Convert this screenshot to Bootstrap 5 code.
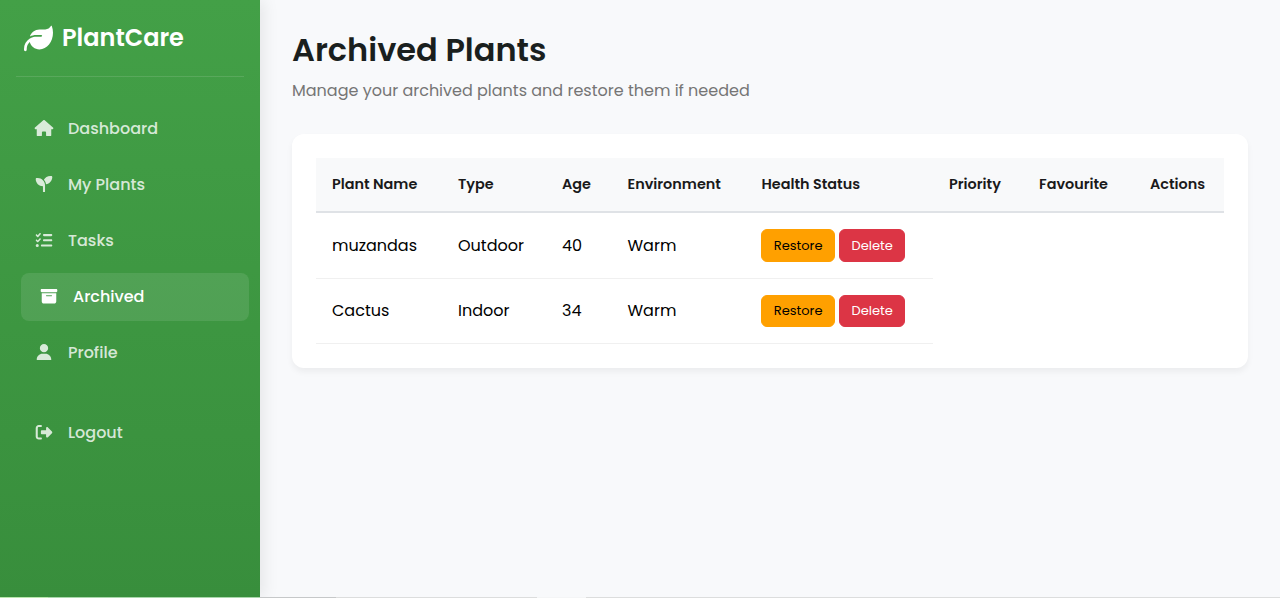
<!DOCTYPE html>
<html lang="en">
<head>
<meta charset="utf-8">
<meta name="viewport" content="width=device-width, initial-scale=1">
<title>PlantCare - Archived Plants</title>
<link href="https://cdn.jsdelivr.net/npm/bootstrap@5.3.0/dist/css/bootstrap.min.css" rel="stylesheet">
<style>
body{font-family:Poppins,Inter,"Open Sans",sans-serif;background:#f8f9fb;color:#1a1f1e;height:598px;overflow:hidden}
.sidebar{width:260px;height:598px;background:linear-gradient(180deg,#43a047,#388e3c);box-shadow:4px 0 15px rgba(0,0,0,.08);padding:16px}
.brand{height:61px;padding:0 0 17px 8px;border-bottom:1px solid rgba(255,255,255,.12);font-size:24px;font-weight:600;color:#fff;gap:9px}
.brand svg{width:29px;height:29px;fill:#fff;margin-top:2px}
.side-menu{margin-top:28px;gap:8px}
.side-menu .nav-link{height:48px;padding:0 16px;gap:12px;color:rgba(255,255,255,.8);font-weight:500;font-size:16px;border-radius:8px}
.side-menu .nav-link.active{background:rgba(255,255,255,.1);color:#fff;transform:translateX(5px)}
.side-menu svg{width:24px;height:16.6px;fill:currentColor;margin-bottom:2px}
.side-menu .logout{margin-top:24px}
.page{padding:32px}
.page h1{font-size:32px;font-weight:600;line-height:36px;margin:0 0 11px}
.page p{font-size:16px;line-height:24px;color:#757575;margin:0 0 31px}
.panel{background:#fff;border-radius:12px;padding:24px;height:234px;box-shadow:0 4px 6px rgba(0,0,0,.05)}
.plants{table-layout:fixed;width:908px;border-collapse:separate;border-spacing:0;color:#000;font-size:16px}
.plants th{background:#f8f9fa;height:55px;padding:0 0 0 16px;border-bottom:2px solid #dfe2e6;font-size:14.4px;font-weight:600;color:#1a1a1a;white-space:nowrap}
.plants td{height:65px;padding:0 0 0 16px;border-bottom:1px solid #f0f0f0;white-space:nowrap}
.plants tbody tr:first-child td{height:66px;padding-top:1px}
.plants td.void{border:0}
.plants .btn{font-size:13px;line-height:20px;padding:5px 0;height:32.6px;border-radius:6px}
.plants .row-actions{margin-left:-.4px}
.plants tr:first-child .row-actions{margin-bottom:1px}
.btn-restore{width:74px;background:#ffa000;border-color:#ffa000;color:#000}
.btn-remove{width:66px;background:#dc3545;border-color:#dc3545;color:#fff}
.edge{height:1px;background:linear-gradient(90deg,#b9e6ad 48px,#a9d7ab 48px 260px,#c6c8c9 260px 336px,#dcdddd 336px 537px,#f4f5f6 537px 586px,#dcdddd 586px)}
</style>
</head>
<body>
<div class="d-flex">
<aside class="sidebar flex-shrink-0">
<div class="brand d-flex align-items-center">
<svg viewBox="0 0 512 512"><path d="M272 96c-78.6 0-145.1 51.5-167.7 122.5c33.6-17 71.5-26.5 111.7-26.5h88c8.8 0 16 7.2 16 16s-7.2 16-16 16H216c-16.6 0-32.7 1.9-48.3 5.4c-25.9 5.9-49.9 16.4-71.4 30.7C38.3 298.8 0 364.9 0 440v16c0 13.3 10.7 24 24 24s24-10.7 24-24V440c0-48.7 20.7-92.5 53.8-123.2C121.6 392.3 190.3 448 272 448l1 0c132.1-.7 239-130.9 239-291.4c0-42.6-7.5-83.1-21.1-119.6c-2.6-6.9-12.7-6.6-16.2-.1C455.9 72.1 418.7 96 376 96L272 96z"/></svg>
<span>PlantCare</span></div>
<nav class="side-menu nav flex-column flex-nowrap">
<a class="nav-link d-flex align-items-center" href="#"><svg viewBox="0 0 576 512"><path d="M575.8 255.5c0 18-15 32.1-32 32.1h-32l.7 160.2c0 2.7-.2 5.4-.5 8.1V472c0 22.1-17.9 40-40 40H392c-22.1 0-40-17.9-40-40V384c0-17.7-14.3-32-32-32H256c-17.7 0-32 14.3-32 32v88c0 22.1-17.9 40-40 40H104c-22.1 0-40-17.9-40-40V287.6H32c-18 0-32-14-32-32.1c0-9 3-17 10-24L266.4 8c7-7 15-8 22-8s15 2 21 7L564.8 231.5c8 7 12 15 11 24z"/></svg><span>Dashboard</span></a>
<a class="nav-link d-flex align-items-center" href="#"><svg viewBox="0 0 512 512"><path d="M512 32c0 113.6-84.6 207.5-194.2 222c-7.1-53.4-30.6-101.6-65.3-139.3C290.8 46.3 364 0 448 0h32c17.7 0 32 14.3 32 32zM0 96C0 78.3 14.3 64 32 64H64c123.7 0 224 100.3 224 224v192c0 17.7-14.3 32-32 32s-32-14.3-32-32V320C100.3 320 0 219.7 0 96z"/></svg><span>My Plants</span></a>
<a class="nav-link d-flex align-items-center" href="#"><svg viewBox="0 0 512 512"><path d="M152.1 38.2c9.9 8.9 10.7 24 1.8 33.9l-72 80c-4.4 4.9-10.6 7.8-17.2 7.9s-12.9-2.4-17.6-7L7 113C-2.3 103.6-2.3 88.4 7 79s24.6-9.4 33.9 0l22.1 22.1 55.1-61.2c8.9-9.9 24-10.7 33.9-1.8zm0 160c9.9 8.9 10.7 24 1.8 33.9l-72 80c-4.4 4.9-10.6 7.8-17.2 7.9s-12.9-2.4-17.6-7L7 273c-9.4-9.4-9.4-24.6 0-33.9s24.6-9.4 33.9 0l22.1 22.1 55.1-61.2c8.9-9.9 24-10.7 33.9-1.8zM224 96c0-17.7 14.3-32 32-32H480c17.7 0 32 14.3 32 32s-14.3 32-32 32H256c-17.7 0-32-14.3-32-32zm0 160c0-17.7 14.3-32 32-32H480c17.7 0 32 14.3 32 32s-14.3 32-32 32H256c-17.7 0-32-14.3-32-32zM160 416c0-17.7 14.3-32 32-32H480c17.7 0 32 14.3 32 32s-14.3 32-32 32H192c-17.7 0-32-14.3-32-32zM48 368a48 48 0 1 1 0 96 48 48 0 1 1 0-96z"/></svg><span>Tasks</span></a>
<a class="nav-link active d-flex align-items-center" href="#"><svg viewBox="0 0 512 512"><path d="M32 32H480c17.7 0 32 14.3 32 32V96c0 17.7-14.3 32-32 32H32C14.3 128 0 113.7 0 96V64C0 46.3 14.3 32 32 32zm0 128H480V416c0 35.3-28.7 64-64 64H96c-35.3 0-64-28.7-64-64V160zm128 80c0 8.8 7.2 16 16 16H336c8.8 0 16-7.2 16-16s-7.2-16-16-16H176c-8.8 0-16 7.2-16 16z"/></svg><span>Archived</span></a>
<a class="nav-link d-flex align-items-center" href="#"><svg viewBox="0 0 448 512"><path d="M224 256A128 128 0 1 0 224 0a128 128 0 1 0 0 256zm-45.7 48C79.8 304 0 383.8 0 482.3C0 498.7 13.3 512 29.7 512H418.3c16.4 0 29.7-13.3 29.7-29.7C448 383.8 368.2 304 269.7 304H178.3z"/></svg><span>Profile</span></a>
<a class="nav-link logout d-flex align-items-center" href="#"><svg viewBox="0 0 512 512"><path d="M377.9 105.9L500.7 228.7c7.2 7.2 11.3 17.1 11.3 27.3s-4.1 20.1-11.3 27.3L377.9 406.1c-6.4 6.4-15 9.9-24 9.9c-18.7 0-33.9-15.2-33.9-33.9l0-62.1-128 0c-17.7 0-32-14.3-32-32l0-64c0-17.7 14.3-32 32-32l128 0 0-62.1c0-18.7 15.2-33.9 33.9-33.9c9 0 17.6 3.6 24 9.9zM160 96L96 96c-17.7 0-32 14.3-32 32l0 256c0 17.7 14.3 32 32 32l64 0c17.7 0 32 14.3 32 32s-14.3 32-32 32l-64 0c-53 0-96-43-96-96L0 128C0 75 43 32 96 32l64 0c17.7 0 32 14.3 32 32s-14.3 32-32 32z"/></svg><span>Logout</span></a>
</nav>
</aside>
<main class="page flex-grow-1">
<h1>Archived Plants</h1>
<p>Manage your archived plants and restore them if needed</p>
<section class="panel">
<table class="plants">
<colgroup><col style="width:126px"><col style="width:104px"><col style="width:65.5px"><col style="width:134px"><col style="width:187.5px"><col style="width:90px"><col style="width:111px"><col style="width:90px"></colgroup>
<thead><tr><th>Plant Name</th><th>Type</th><th>Age</th><th>Environment</th><th>Health Status</th><th>Priority</th><th>Favourite</th><th>Actions</th></tr></thead>
<tbody>
<tr><td>muzandas</td><td>Outdoor</td><td>40</td><td>Warm</td><td><div class="row-actions d-flex gap-1"><button class="btn btn-restore">Restore</button><button class="btn btn-remove">Delete</button></div></td><td class="void" colspan="3"></td></tr>
<tr><td>Cactus</td><td>Indoor</td><td>34</td><td>Warm</td><td><div class="row-actions d-flex gap-1"><button class="btn btn-restore">Restore</button><button class="btn btn-remove">Delete</button></div></td><td class="void" colspan="3"></td></tr>
</tbody>
</table>
</section>
</main>
</div>
<div class="edge fixed-bottom"></div>
<script src="https://cdn.jsdelivr.net/npm/bootstrap@5.3.0/dist/js/bootstrap.bundle.min.js"></script>
</body>
</html>
